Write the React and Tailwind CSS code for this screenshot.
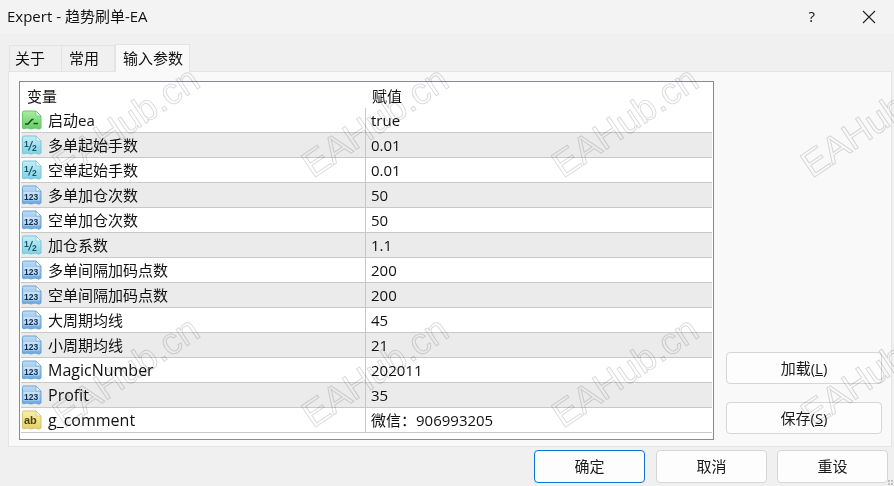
import React from "react";

const FONT = '"Open Sans", "Noto Sans CJK SC", sans-serif';

const rows = [
  { name: "启动ea", value: "true", icon: "bool" },
  { name: "多单起始手数", value: "0.01", icon: "half" },
  { name: "空单起始手数", value: "0.01", icon: "half" },
  { name: "多单加仓次数", value: "50", icon: "int" },
  { name: "空单加仓次数", value: "50", icon: "int" },
  { name: "加仓系数", value: "1.1", icon: "half" },
  { name: "多单间隔加码点数", value: "200", icon: "int" },
  { name: "空单间隔加码点数", value: "200", icon: "int" },
  { name: "大周期均线", value: "45", icon: "int" },
  { name: "小周期均线", value: "21", icon: "int" },
  { name: "MagicNumber", value: "202011", icon: "int", latin: true },
  { name: "Profit", value: "35", icon: "int", latin: true },
  { name: "g_comment", value: "微信：906993205", icon: "str", latin: true },
];

const iconColors = {
  bool: { light: "#a8eea0", dark: "#62cc60", edge: "#6cc46c" },
  half: { light: "#c4eef6", dark: "#7fd2e4", edge: "#7cc4d8" },
  int: { light: "#c0dcf4", dark: "#68a8e0", edge: "#6ea4d4" },
  str: { light: "#f8f0a8", dark: "#e4d268", edge: "#d4c470" },
};

const ParamIcon = ({ type }) => {
  const c = iconColors[type];
  const id = `grad-${type}`;
  return (
    <svg width="21" height="21" viewBox="0 0 21 21" className="shrink-0">
      <defs>
        <linearGradient id={id} x1="0" y1="0" x2="0" y2="1">
          <stop offset="0" stopColor={c.light} />
          <stop offset="1" stopColor={c.dark} />
        </linearGradient>
      </defs>
      <path
        d="M1.5 2.5 Q1.5 1 3 1 H15 L20 6 V18 Q18 20 16 18.5 Q14 17.5 12 18.5 Q10 19.5 8 18.5 Q6 17.5 4 18.5 Q2 19.5 1.5 18 Z"
        fill={`url(#${id})`}
        stroke={c.edge}
      />
      <path d="M15 1 V6 H20 Z" fill="#eef8f8" stroke={c.edge} strokeWidth="0.7" />
      {type === "bool" && (
        <path d="M4 14 H7 L11 9.5 H12.5 M12.5 13.5 H17" fill="none" stroke="#174f20" strokeWidth="1.6" />
      )}
      {type === "half" && (
        <>
          <text x="3" y="11.5" fontSize="8.5" fontWeight="700" fill="#1c5468" fontFamily="Liberation Sans, sans-serif">
            1
          </text>
          <path d="M11.5 6 L7.5 15.5" stroke="#1c5468" strokeWidth="1.1" fill="none" />
          <text x="11" y="15.5" fontSize="8.5" fontWeight="700" fill="#1c5468" fontFamily="Liberation Sans, sans-serif">
            2
          </text>
        </>
      )}
      {type === "int" && (
        <>
          <rect x="2.5" y="7" width="16" height="8.5" fill="#eaf4fc" opacity="0.55" />
          <text x="3" y="14.5" fontSize="8.5" fontWeight="700" fill="#122c52" fontFamily="Liberation Sans, sans-serif">
            123
          </text>
        </>
      )}
      {type === "str" && (
        <text x="3" y="14" fontSize="11" fontWeight="700" fill="#4c4410" fontFamily="Liberation Sans, sans-serif">
          ab
        </text>
      )}
    </svg>
  );
};

const Button = ({ children, className = "" }) => (
  <button
    className={`flex items-center justify-center rounded-[4px] border bg-[#fdfdfd] text-[15px] text-[#1a1a1a] ${className}`}
  >
    {children}
  </button>
);

// watermark positions, these sit over the whole window
const marks = [
  "left-[57px] top-[150px]",
  "left-[306px] top-[150px]",
  "left-[556px] top-[150px]",
  "left-[805px] top-[150px]",
  "left-[57px] top-[400px]",
  "left-[306px] top-[400px]",
  "left-[556px] top-[400px]",
  "left-[805px] top-[400px]",
];

const App = () => {
  return (
    <div
      className="relative flex h-[486px] w-[894px] flex-col overflow-hidden bg-[#f0f0f0] text-[#111111]"
      style={{ fontFamily: FONT }}
    >
      {/* Title bar */}
      <div className="flex h-[33px] shrink-0 items-center justify-between bg-[#f3f3f3] pl-[7px]">
        <span className="text-[15px]">Expert - 趋势刷单-EA</span>
        <div className="flex items-center">
          <span className="mr-[47px] text-[15px]">?</span>
          <svg width="14" height="14" viewBox="0 0 14 14" className="mr-[18px]">
            <path d="M1 1 L13 13 M13 1 L1 13" stroke="#222222" strokeWidth="1.1" fill="none" />
          </svg>
        </div>
      </div>

      {/* Tabs */}
      <div className="flex h-[38px] shrink-0 items-end pl-[9px]">
        <div className="flex h-[26px] w-[53px] items-center border border-b-0 border-[#e4e4e4] pl-[5px] text-[15px]">
          关于
        </div>
        <div className="flex h-[26px] w-[53px] items-center border-t border-r border-[#e4e4e4] pl-[7px] text-[15px]">
          常用
        </div>
        <div className="z-10 -mb-px flex h-[28px] w-[75px] items-center border border-b-0 border-[#e4e4e4] bg-[#f9f9f9] pl-[7px] text-[15px]">
          输入参数
        </div>
      </div>

      {/* Page */}
      <div className="ml-[8px] mr-[2px] flex h-[376px] shrink-0 border border-[#e4e4e4] bg-[#f9f9f9] pl-[10px] pt-[9px]">
        <div className="h-[359px] w-[695px] shrink-0 border border-[#868b92] bg-white px-px">
          <div className="grid h-[26px] grid-cols-[345px_1fr] items-center pt-[2px] text-[15px]">
            <span className="pl-[6px]">变量</span>
            <span className="pl-[6px]">赋值</span>
          </div>
          {rows.map((row, i) => (
            <div
              key={row.name}
              className={`grid h-[25px] grid-cols-[345px_1fr] border-b border-[#c8c8c8] text-[15px] ${
                i % 2 === 1 ? "bg-[#ebebeb]" : "bg-white"
              }`}
            >
              <div className="flex items-center gap-[6px] border-r border-[#c8c8c8]">
                <ParamIcon type={row.icon} />
                <span className={row.latin ? "text-[16px]" : ""}>{row.name}</span>
              </div>
              <div className="flex items-center pl-[5px]">{row.value}</div>
            </div>
          ))}
        </div>

        <div className="ml-[12px] flex flex-col gap-[18px] pt-[271px]">
          <Button className="h-[32px] w-[156px] border-[#d6d6d6]">
            加载(<span className="underline">L</span>)
          </Button>
          <Button className="h-[32px] w-[156px] border-[#d6d6d6]">
            保存(<span className="underline">S</span>)
          </Button>
        </div>
      </div>

      {/* Bottom buttons */}
      <div className="flex flex-1 items-center justify-end gap-[10px] pr-[6px]">
        <Button className="mr-px h-[33px] w-[111px] border-[#0a74d0]">确定</Button>
        <Button className="h-[33px] w-[111px] border-[#d6d6d6]">取消</Button>
        <Button className="h-[33px] w-[111px] border-[#d6d6d6]">重设</Button>
      </div>

      {/* Size grip */}
      <div className="absolute bottom-[1px] right-[1px] grid grid-cols-2 gap-px">
        <span className="h-[2px] w-[2px] bg-[#c0c0c0]" />
        <span className="h-[2px] w-[2px] bg-[#c0c0c0]" />
        <span className="h-[2px] w-[2px] bg-[#c0c0c0]" />
        <span className="h-[2px] w-[2px] bg-[#c0c0c0]" />
      </div>

      {/* Watermark */}
      {marks.map((pos) => (
        <span
          key={pos}
          className={`pointer-events-none absolute z-20 origin-left -rotate-[34deg] whitespace-nowrap text-[37px] leading-none text-transparent mix-blend-multiply [-webkit-text-stroke:1px_#dcdcdc] ${pos}`}
          style={{ fontFamily: '"Liberation Sans", sans-serif' }}
        >
          EAHub.cn
        </span>
      ))}
    </div>
  );
};

export default App;
